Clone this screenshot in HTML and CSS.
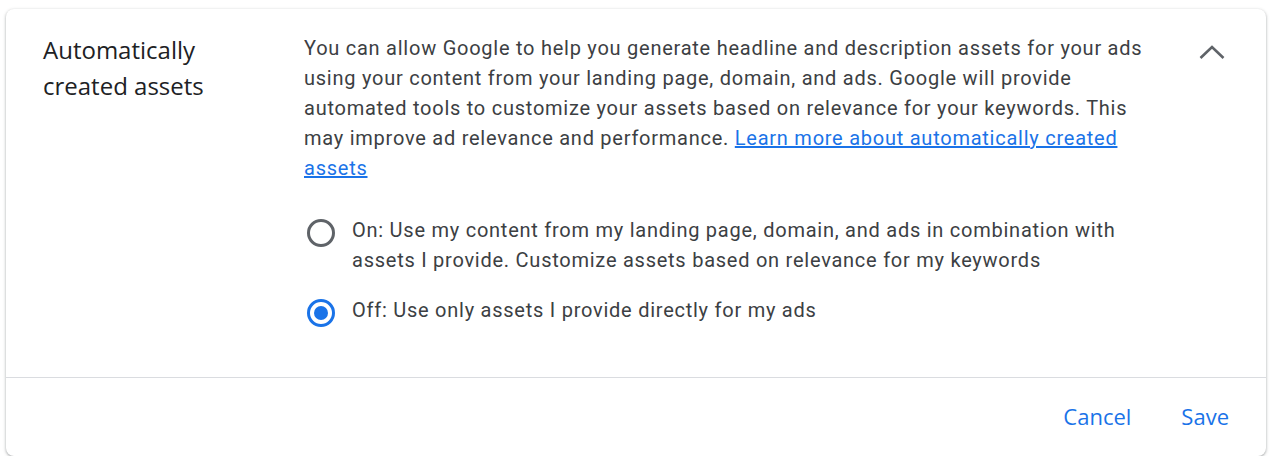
FILE: index.html
```html
<!DOCTYPE html>
<html>
<head>
<meta charset="utf-8">
<link rel="stylesheet" href="styles.css">
</head>
<body>
<div class="card">
  <div class="main">
    <div class="title">Automatically<br>created assets</div>
    <div class="content">
      <p class="desc">You can allow Google to help you generate headline and description assets for your ads using your content from your landing page, domain, and ads. Google will provide automated tools to customize your assets based on relevance for your keywords. This may improve ad relevance and performance. <a href="#" class="link">Learn more about automatically created assets</a></p>
      <div class="options">
        <div class="option">
          <span class="radio"></span>
          <span class="label">On: Use my content from my landing page, domain, and ads in combination with assets I provide. Customize assets based on relevance for my keywords</span>
        </div>
        <div class="option">
          <span class="radio checked"></span>
          <span class="label">Off: Use only assets I provide directly for my ads</span>
        </div>
      </div>
    </div>
    <div class="toggle">
      <svg width="26" height="16" viewBox="0 0 26 16"><path d="M1.5 14 L13 3 L24.5 14" fill="none" stroke="#5f6368" stroke-width="2.6"/></svg>
    </div>
  </div>
  <div class="footer">
    <button class="btn">Cancel</button>
    <button class="btn">Save</button>
  </div>
</div>
</body>
</html>
```
FILE: styles.css
```css
html, body { margin: 0; padding: 0; background: #fff; }
body { padding: 9px 12px 0 6px; }
.card {
  width: 1260px;
  height: 447px;
  box-sizing: border-box;
  background: #fff;
  border-radius: 8px;
  box-shadow: 0 1px 2px rgba(60,64,67,0.3), 0 1px 3px 1px rgba(60,64,67,0.15);
  display: flex;
  flex-direction: column;
}
.main {
  display: flex;
  padding: 24px 0 50px 37px;
  border-bottom: 1px solid #dadce0;
}
.title {
  width: 261px;
  font-family: "Open Sans", "Noto Sans", sans-serif;
  font-size: 24px;
  line-height: 36px;
  color: #202124;
  flex-shrink: 0;
  margin-top: -1px;
}
.content {
  width: 845px;
  font-family: Roboto, sans-serif;
  font-size: 20px;
  letter-spacing: 0.75px;
  line-height: 30px;
  color: #3c4043;
  flex-shrink: 0;
}
.desc { margin: 0; }
.link { color: #1a73e8; text-decoration: underline; }
.options { margin-top: 32px; display: flex; flex-direction: column; gap: 20px; }
.option { display: flex; align-items: flex-start; }
.radio {
  width: 28px; height: 28px;
  box-sizing: border-box;
  border: 3px solid #5f6368;
  border-radius: 50%;
  margin: 4px 17px 0 3px;
  flex-shrink: 0;
  position: relative;
}
.radio.checked { border-color: #1a73e8; }
.radio.checked::after {
  content: "";
  position: absolute;
  left: 4px; top: 4px;
  width: 14px; height: 14px;
  border-radius: 50%;
  background: #1a73e8;
}
.label { width: 790px; }
.toggle { margin-left: 50px; padding-top: 11px; }
.footer {
  display: flex;
  justify-content: flex-end;
  align-items: center;
  gap: 14px;
  padding: 0 19px 0 0;
  flex: 1;
}
.btn {
  background: none;
  border: none;
  font-family: "Open Sans", "Noto Sans", sans-serif;
  font-size: 22px;
  font-weight: 500;
  color: #1a73e8;
  padding: 6px 18px;
  margin-top: -3px;
  cursor: pointer;
}
```
